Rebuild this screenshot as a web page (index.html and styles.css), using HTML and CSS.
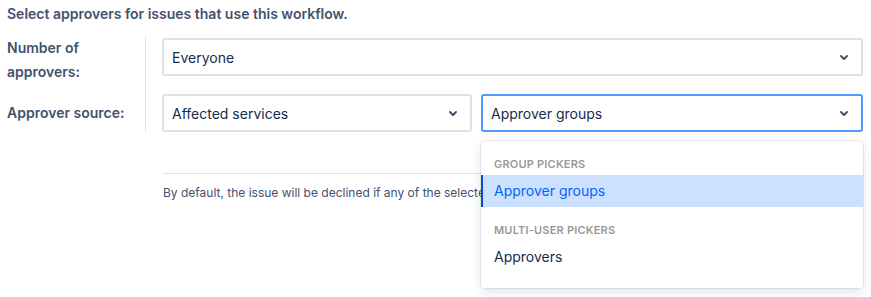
FILE: index.html
```html
<!DOCTYPE html>
<html lang="en">
<head>
    <meta charset="UTF-8">
    <title>Approvers</title>
    <link rel="stylesheet" href="styles.css">
</head>
<body>
    <p class="intro">Select approvers for issues that use this workflow.</p>
    <div class="form">
        <div class="form-row">
            <div class="form-label">Number of approvers:</div>
            <div class="form-fields">
                <div class="select">
                    <span>Everyone</span>
                    <svg class="chevron" width="24" height="24" viewBox="0 0 24 24"><path d="M8.292 10.293a1.009 1.009 0 000 1.419l2.939 2.965c.218.215.5.322.779.322s.556-.107.769-.322l2.93-2.955a1.01 1.01 0 000-1.419.987.987 0 00-1.406 0l-2.298 2.317-2.307-2.327a.99.99 0 00-1.406 0z" fill="currentColor"/></svg>
                </div>
            </div>
        </div>
        <div class="form-row">
            <div class="form-label">Approver source:</div>
            <div class="form-fields">
                <div class="select select-source">
                    <span>Affected services</span>
                    <svg class="chevron" width="24" height="24" viewBox="0 0 24 24"><path d="M8.292 10.293a1.009 1.009 0 000 1.419l2.939 2.965c.218.215.5.322.779.322s.556-.107.769-.322l2.93-2.955a1.01 1.01 0 000-1.419.987.987 0 00-1.406 0l-2.298 2.317-2.307-2.327a.99.99 0 00-1.406 0z" fill="currentColor"/></svg>
                </div>
                <div class="select-wrap">
                    <div class="select focused">
                        <span>Approver groups</span>
                        <svg class="chevron" width="24" height="24" viewBox="0 0 24 24"><path d="M8.292 10.293a1.009 1.009 0 000 1.419l2.939 2.965c.218.215.5.322.779.322s.556-.107.769-.322l2.93-2.955a1.01 1.01 0 000-1.419.987.987 0 00-1.406 0l-2.298 2.317-2.307-2.327a.99.99 0 00-1.406 0z" fill="currentColor"/></svg>
                    </div>
                    <div class="menu">
                        <div class="group">
                            <div class="group-heading">Group pickers</div>
                            <div class="option selected">Approver groups</div>
                        </div>
                        <div class="group">
                            <div class="group-heading">Multi-user pickers</div>
                            <div class="option">Approvers</div>
                        </div>
                    </div>
                </div>
            </div>
        </div>
    </div>
    <div class="note">By default, the issue will be declined if any of the selected approvers decline it.</div>
</body>
</html>
```

FILE: styles.css
```css
html {
    height: 100%;
}
body {
    margin: 0;
    min-height: 100%;
    padding: 0 8px 0 7px;
    font-family: Inter, "Noto Sans", sans-serif;
    font-size: 14px;
    color: #172b4d;
}
.intro {
    margin: 0;
    padding-top: 4px;
    line-height: 20px;
    font-weight: 600;
    color: #42526e;
}
.form {
    margin-top: 14px;
}
.form-row {
    display: flex;
}
.form-label {
    width: 139px;
    flex-shrink: 0;
    box-sizing: border-box;
    padding-right: 20px;
    padding-bottom: 10px;
    border-right: 1px solid #dfe1e6;
    font-weight: 600;
    color: #42526e;
    line-height: 24px;
    margin-top: -2px;
}
.form-row:last-child .form-label {
    padding-right: 10px;
    padding-bottom: 0;
    margin-top: 0;
    display: flex;
    align-items: center;
    height: 38px;
}
.form-fields {
    flex: 1;
    display: flex;
    gap: 9px;
    margin-left: 16px;
}
.select {
    flex: 1;
    height: 38px;
    box-sizing: border-box;
    border: 2px solid #dfe1e6;
    border-radius: 3px;
    background: #fff;
    display: flex;
    align-items: center;
    justify-content: space-between;
    padding: 0 5px 0 8px;
}
.select-source {
    flex: 0 0 310px;
}
.select.focused {
    border-color: #4c9aff;
}
.chevron {
    color: #42526e;
}
.select-wrap {
    flex: 1;
    display: flex;
    position: relative;
}
.menu {
    position: absolute;
    top: 47px;
    left: 0;
    right: 0;
    z-index: 2;
    background: #fff;
    border-radius: 4px;
    box-shadow: 0 0 0 1px rgba(9, 30, 66, 0.08), 0 4px 11px rgba(9, 30, 66, 0.12);
    padding: 7px 0 8px;
}
.group {
    padding: 7px 0;
}
.group-heading {
    padding: 0 13px;
    line-height: 18px;
    margin-bottom: 2px;
    font-size: 11px;
    font-weight: 600;
    letter-spacing: 0.2px;
    text-transform: uppercase;
    color: #999;
}
.option {
    padding: 0 13px;
    line-height: 32px;
    color: #172b4d;
}
.option.selected {
    background: #cce0ff;
    color: #0065ff;
    box-shadow: inset 2px 0 0 #0052cc;
}
.note {
    margin: 41px 0 0 156px;
    border-top: 1px solid #dfe1e6;
    padding-top: 11px;
    font-size: 12px;
    line-height: 16px;
    color: #42526e;
    white-space: nowrap;
    overflow: hidden;
}
```
